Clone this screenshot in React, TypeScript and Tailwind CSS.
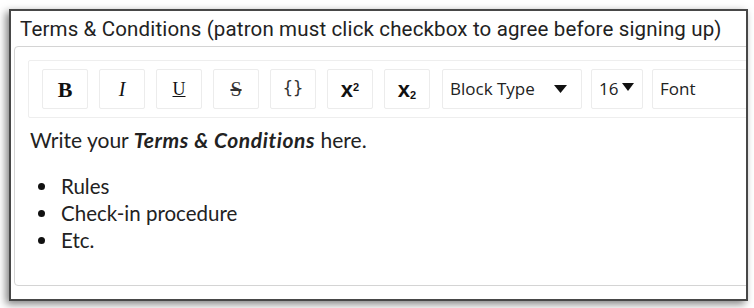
const btn =
  "w-[46px] h-[40px] shrink-0 flex items-center justify-center bg-white border border-[#ececec] rounded-[2px] text-[#111]";

const items = ["Rules", "Check-in procedure", "Etc."];

function App() {
  return (
    <div className="w-[754px] h-[308px] bg-white overflow-hidden pl-[9px] pt-[9px]">
      <div className="w-[739px] h-[292px] border-2 border-[#474747] bg-white overflow-hidden shadow-[-3px_3px_8px_rgba(0,0,0,0.5)]">
        <div className="h-[35px] pl-[9px] pt-[4px] font-['Roboto',sans-serif] text-[20.5px] tracking-[0.15px] text-[#222] leading-[28px] whitespace-nowrap">
          Terms &amp; Conditions (patron must click checkbox to agree before signing up)
        </div>
        <div className="ml-[3px] w-[760px] h-[240px] border border-[#d4d4d4] rounded-[4px] pt-[13px] pl-[13px]">
          <div className="h-[58px] border border-[#eeeeee] rounded-[2px] flex items-center pl-[13px] gap-[11px]">
            <div className={btn}>
              <span className="font-['Liberation_Serif',serif] font-bold text-[22px]">B</span>
            </div>
            <div className={btn}>
              <span className="font-['Liberation_Serif',serif] italic text-[20px]">I</span>
            </div>
            <div className={btn}>
              <span className="font-['Liberation_Serif',serif] underline text-[18px]">U</span>
            </div>
            <div className={btn}>
              <span className="font-['Liberation_Serif',serif] line-through text-[20px] text-[#333]">S</span>
            </div>
            <div className={btn}>
              <span className="font-['DejaVu_Sans_Mono',monospace] text-[17px] text-[#333]">{"{}"}</span>
            </div>
            <div className={btn}>
              <span className="font-['Liberation_Sans',sans-serif] font-bold text-[22px]">
                x<sup className="text-[11px]">2</sup>
              </span>
            </div>
            <div className={btn}>
              <span className="font-['Liberation_Sans',sans-serif] font-bold text-[22px]">
                x<sub className="text-[11px]">2</sub>
              </span>
            </div>
            <div className="ml-[1px] w-[140px] h-[40px] shrink-0 flex items-center justify-between pl-[7px] pr-[14px] border border-[#ececec] rounded-[2px] font-['Open_Sans',sans-serif] text-[17px] text-[#222]">
              <span>Block Type</span>
              <svg width="13" height="8" viewBox="0 0 13 8">
                <path d="M0 0h13L6.5 8z" fill="#111" />
              </svg>
            </div>
            <div className="ml-[-2px] w-[52px] h-[40px] shrink-0 flex items-center pl-[7px] gap-[4px] border border-[#ececec] rounded-[2px] font-['Open_Sans',sans-serif] text-[17px] text-[#222]">
              <span>16</span>
              <svg width="12" height="8" viewBox="0 0 12 8" className="mb-[4px]">
                <path d="M0 0h12L6 8z" fill="#111" />
              </svg>
            </div>
            <div className="ml-[-2px] w-[120px] h-[40px] shrink-0 flex items-center pl-[7px] border border-[#ececec] rounded-[2px] font-['Open_Sans',sans-serif] text-[17px] text-[#222]">
              Font
            </div>
          </div>
          <div className="pl-[2px] pt-[8px] font-['Lato',sans-serif] text-[21px] text-[#222] leading-[27px]">
            <p>
              Write your <b className="italic tracking-[0.6px]">Terms &amp; Conditions</b> here.
            </p>
            <ul className="mt-[20px] flex flex-col text-[20.5px]">
              {items.map((t) => (
                <li key={t} className="flex items-center">
                  <span className="ml-[8px] w-[7px] h-[7px] rounded-full bg-[#111] mr-[16px]" />
                  <span>{t}</span>
                </li>
              ))}
            </ul>
          </div>
        </div>
      </div>
    </div>
  );
}

export default App;
